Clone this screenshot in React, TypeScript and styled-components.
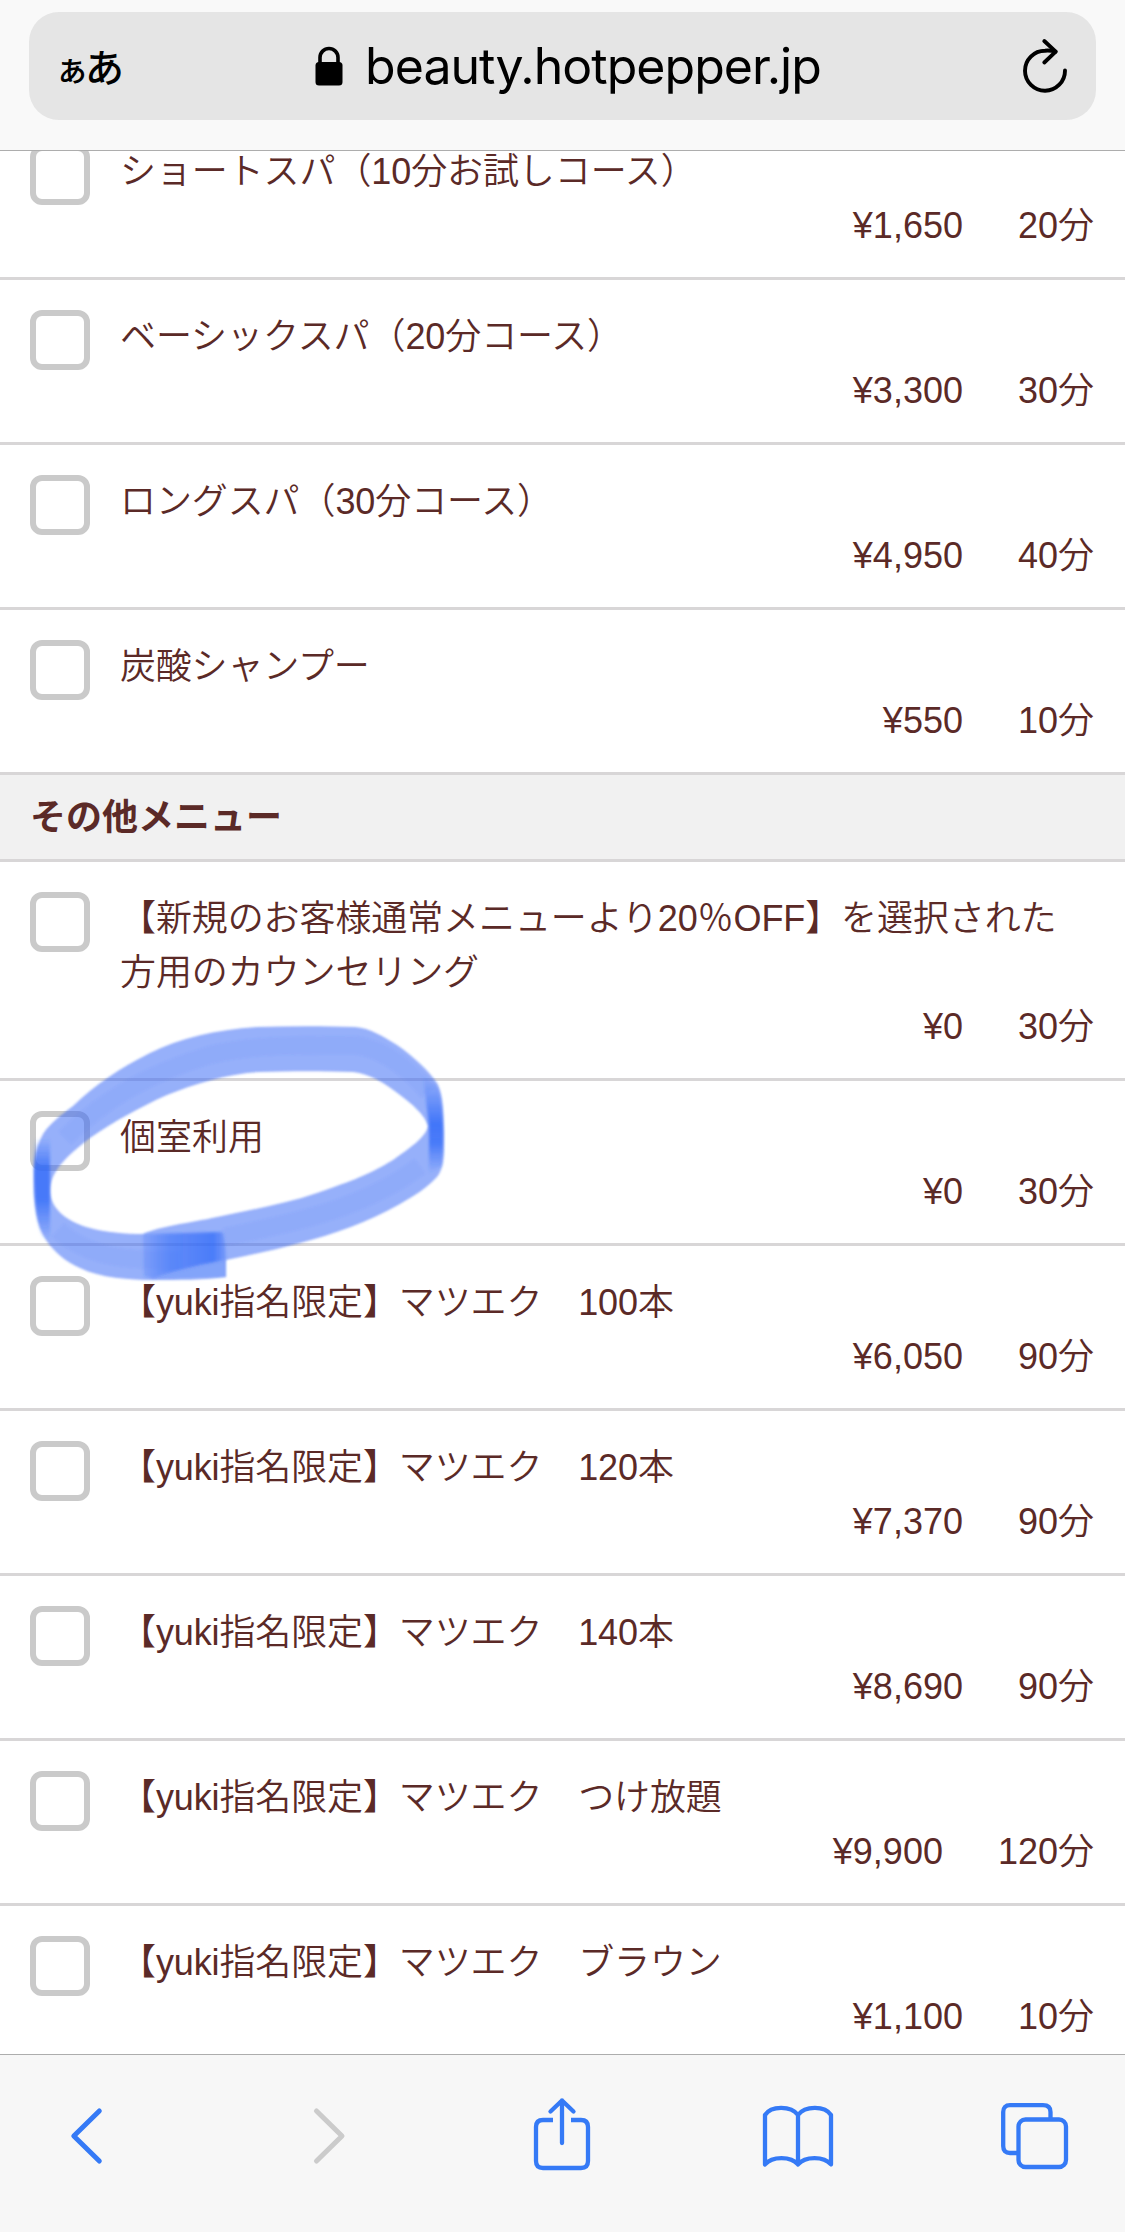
import React from 'react';
import styled, { createGlobalStyle } from 'styled-components';

const GlobalStyle = createGlobalStyle`
  * { box-sizing: border-box; }
  body { margin: 0; background: #fff; }
`;

const Screen = styled.div`
  position: relative;
  display: flex;
  flex-direction: column;
  width: 1125px;
  height: 2232px;
  overflow: hidden;
  background: #fff;
  color: #5b2a27;
  font-family: 'Liberation Sans', 'Noto Sans CJK JP', sans-serif;
  font-size: 36px;
  line-height: 54px;
`;

const Header = styled.header`
  flex: none;
  height: 151px;
  padding: 12px 29px 0;
  background: #f9f9f9;
  border-bottom: 1px solid #adadad;
`;

const AddressBar = styled.div`
  display: flex;
  align-items: center;
  justify-content: space-between;
  height: 108px;
  padding: 0 26px 0 28px;
  border-radius: 30px;
  background: #e5e5e5;
  color: #000;
`;

const TextSize = styled.div`
  display: flex;
  align-items: baseline;
  width: 64px;
  font-family: 'Noto Sans CJK JP', sans-serif;
  font-weight: 500;
  line-height: 60px;
`;

const Kana = styled.span<{ $size: number; $shift: number }>`
  font-size: ${(p) => p.$size}px;
  margin-left: ${(p) => p.$shift}px;
`;

const Site = styled.div`
  display: flex;
  align-items: center;
  gap: 22px;
  margin-right: 5px;
`;

const Domain = styled.span`
  font-family: Inter, sans-serif;
  font-size: 50px;
  line-height: 60px;
  letter-spacing: -0.98px;
`;

const Menu = styled.main`
  flex: 1;
  min-height: 0;
  overflow: hidden;
`;

const List = styled.ul<{ $scrolled?: boolean }>`
  list-style: none;
  margin: ${(p) => (p.$scrolled ? '-36px' : '0')} 0 0;
  padding: 0;
`;

const Item = styled.li`
  display: flex;
  align-items: flex-start;
  gap: 30px;
  padding: 30px 30px 24px;
  border-bottom: 3px solid #d8d6d7;
`;

const Checkbox = styled.span`
  flex: none;
  width: 60px;
  height: 60px;
  border: 6px solid #cacaca;
  border-radius: 12px;
  background: #fff;
`;

const Details = styled.div`
  flex: 1;
`;

const Title = styled.div<{ $tracking?: number }>`
  font-weight: 350;
  letter-spacing: ${(p) => p.$tracking ?? 0}px;
  white-space: pre-line;
`;

const Meta = styled.div`
  display: flex;
  justify-content: flex-end;
  gap: 55px;
  padding-right: 1px;
  font-weight: 350;
`;

const SectionTitle = styled.h2`
  height: 87px;
  margin: 0;
  padding: 16px 30px 0;
  background: #f1f1f1;
  border-bottom: 3px solid #d8d6d7;
  font-size: 36px;
  font-weight: 700;
  line-height: 54px;
`;

const Toolbar = styled.nav`
  flex: none;
  display: flex;
  justify-content: space-between;
  height: 178px;
  padding: 41px 51px 0 46px;
  background: #f7f7f7;
  border-top: 1px solid #adadad;
`;

const ToolIcon = styled.svg<{ $muted?: boolean; $weight?: number }>`
  width: 80px;
  height: 80px;
  fill: none;
  stroke: ${(p) => (p.$muted ? '#cbcbcb' : '#357af6')};
  stroke-width: ${(p) => p.$weight ?? 4.3};
  stroke-linecap: round;
  stroke-linejoin: round;
`;

const Marker = styled.svg`
  position: absolute;
  left: 20px;
  top: 1010px;
  width: 440px;
  height: 290px;
  pointer-events: none;
`;

type MenuItem = { title: string; price: string; time: string; tracking?: number };

const spa: MenuItem[] = [
  { title: 'ショートスパ（10分お試しコース）', price: '¥1,650', time: '20分', tracking: -0.1 },
  { title: 'ベーシックスパ（20分コース）', price: '¥3,300', time: '30分', tracking: -0.1 },
  { title: 'ロングスパ（30分コース）', price: '¥4,950', time: '40分', tracking: -0.1 },
  { title: '炭酸シャンプー', price: '¥550', time: '10分', tracking: -0.2 },
];

const others: MenuItem[] = [
  {
    title: '【新規のお客様通常メニューより20％OFF】を選択された\n方用のカウンセリング',
    price: '¥0',
    time: '30分',
    tracking: -0.1,
  },
  { title: '個室利用', price: '¥0', time: '30分' },
  { title: '【yuki指名限定】マツエク　100本', price: '¥6,050', time: '90分', tracking: -0.12 },
  { title: '【yuki指名限定】マツエク　120本', price: '¥7,370', time: '90分', tracking: -0.12 },
  { title: '【yuki指名限定】マツエク　140本', price: '¥8,690', time: '90分', tracking: -0.12 },
  { title: '【yuki指名限定】マツエク　つけ放題', price: '¥9,900', time: '120分', tracking: -0.12 },
  { title: '【yuki指名限定】マツエク　ブラウン', price: '¥1,100', time: '10分', tracking: -0.12 },
];

function Row({ title, price, time, tracking }: MenuItem) {
  return (
    <Item>
      <Checkbox />
      <Details>
        <Title $tracking={tracking}>{title}</Title>
        <Meta>
          <span>{price}</span>
          <span>{time}</span>
        </Meta>
      </Details>
    </Item>
  );
}

function LockIcon() {
  return (
    <svg width="28" height="42" viewBox="0 0 28 42">
      <path d="M5 19V12.500a9 9 0 0 1 18 0V19" fill="none" stroke="#000" strokeWidth="3.600" />
      <rect x="0.500" y="17" width="27" height="23.500" rx="3.500" />
    </svg>
  );
}

function ReloadIcon() {
  return (
    <svg width="50" height="60" viewBox="0 0 50 60" fill="none" stroke="#000" strokeWidth="3.900" strokeLinecap="round" strokeLinejoin="round">
      <path d="M45 34.500A20 20 0 1 1 25 14.700C29 14.300 32 14.700 35.500 15.700" />
      <path d="M24.300 5L35.700 15.700L24.300 26.500" />
    </svg>
  );
}

function MarkerCircle() {
  return (
    <Marker viewBox="20 1010 440 290">
      <defs>
        <filter id="soft" x="-5%" y="-5%" width="110%" height="110%">
          <feGaussianBlur stdDeviation="1.2" />
        </filter>
        <filter id="softer" x="-30%" y="-10%" width="160%" height="120%">
          <feGaussianBlur stdDeviation="1.4" />
        </filter>
        <linearGradient id="leftInk" x1="0" y1="0" x2="0" y2="1">
          <stop offset="0" stopColor="#2b66f8" stopOpacity="0" />
          <stop offset="0.3" stopColor="#2b66f8" stopOpacity="0.75" />
          <stop offset="0.6" stopColor="#2b66f8" stopOpacity="0.75" />
          <stop offset="1" stopColor="#2b66f8" stopOpacity="0" />
        </linearGradient>
        <linearGradient id="rightInk" x1="0" y1="0" x2="0" y2="1">
          <stop offset="0" stopColor="#2b66f8" stopOpacity="0" />
          <stop offset="0.5" stopColor="#2b66f8" stopOpacity="0.8" />
          <stop offset="0.7" stopColor="#2b66f8" stopOpacity="0.7" />
          <stop offset="1" stopColor="#2b66f8" stopOpacity="0" />
        </linearGradient>
        <linearGradient id="overlapInk" x1="0" y1="0" x2="1" y2="0">
          <stop offset="0" stopColor="#2b66f8" stopOpacity="0.2" />
          <stop offset="0.3" stopColor="#2b66f8" stopOpacity="0.5" />
          <stop offset="0.85" stopColor="#2b66f8" stopOpacity="0.7" />
          <stop offset="1" stopColor="#2b66f8" stopOpacity="0.3" />
        </linearGradient>
      </defs>
      <path
        filter="url(#soft)"
        fill="#3865f5"
        fillOpacity="0.52"
        fillRule="evenodd"
        d="M34 1180C34 1165 35 1148 43 1134C50 1123 60 1116 73 1106C96 1084 120 1068 150 1053C180 1038 215 1030 257 1027C290 1026 325 1026 355 1027C370 1028 384 1037 397 1045C413 1056 430 1072 437 1083C444 1096 443 1115 444 1133C444 1150 445 1168 437 1177C426 1189 412 1197 400 1204C368 1222 334 1234 300 1243C275 1250 250 1255 226 1260V1277C204 1280 178 1280 153 1280C130 1280 100 1278 80 1268C66 1262 54 1252 46 1240C36 1225 34 1205 34 1180ZM50 1190C51 1172 64 1158 90 1138C115 1121 140 1107 167 1095C195 1084 225 1074 260 1072C290 1071 325 1071 353 1072C370 1074 385 1083 400 1095C412 1104 424 1114 428 1126C426 1137 410 1148 393 1160C365 1177 345 1183 317 1193C285 1204 250 1210 217 1217C190 1223 160 1226 143 1234C125 1234 105 1232 90 1228C70 1223 50 1210 50 1190Z"
      />
      <path
        filter="url(#soft)"
        fill="none"
        stroke="#3c68f0"
        strokeOpacity="0.08"
        strokeWidth="18"
        d="M65 1138C105 1098 150 1073 210 1055C260 1043 310 1046 355 1045C385 1049 411 1071 428 1092M420 1166C360 1212 280 1225 225 1237M58 1230C90 1259 130 1260 180 1261"
      />
      <path filter="url(#softer)" fill="url(#leftInk)" d="M35 1138H50V1240H43C33 1215 33 1170 35 1138Z" />
      <path filter="url(#softer)" fill="url(#rightInk)" d="M423 1075L437 1085C444 1100 444 1140 442 1166L429 1174V1126Z" />
      <path filter="url(#softer)" fill="url(#overlapInk)" d="M143 1234L222 1232Q225 1233 226 1260C204 1264 172 1271 153 1279L144 1276Z" />
      <path filter="url(#soft)" fill="#3168f8" fillOpacity="0.18" d="M153 1279C180 1270 204 1264 226 1260V1277Z" />
    </Marker>
  );
}

export default function App() {
  return (
    <Screen>
      <GlobalStyle />
      <Header>
        <AddressBar>
          <TextSize>
            <Kana $size={34} $shift={-2}>ぁ</Kana>
            <Kana $size={39} $shift={-4}>あ</Kana>
          </TextSize>
          <Site>
            <LockIcon />
            <Domain>beauty.hotpepper.jp</Domain>
          </Site>
          <ReloadIcon />
        </AddressBar>
      </Header>
      <Menu>
        <List $scrolled>
          {spa.map((item) => <Row key={item.title} {...item} />)}
        </List>
        <SectionTitle>その他メニュー</SectionTitle>
        <List>
          {others.map((item) => <Row key={item.title} {...item} />)}
        </List>
      </Menu>
      <MarkerCircle />
      <Toolbar>
        <ToolIcon $weight={5} viewBox="0 0 80 80"><path d="M53.300 15L27.800 40L53.300 65" /></ToolIcon>
        <ToolIcon $weight={5} $muted viewBox="0 0 80 80"><path d="M33.500 15L59 40L33.500 65" /></ToolIcon>
        <ToolIcon viewBox="0 0 80 80">
          <path strokeLinecap="butt" d="M33 24H23Q16 24 16 31V65Q16 72 23 72H61Q68 72 68 65V31Q68 24 61 24H51" />
          <path d="M42 47V4.500M30.500 15.500L42 4.500L53.500 15.500" />
        </ToolIcon>
        <ToolIcon viewBox="0 0 80 80">
          <path d="M8 68.500V19C14 9.500 34 9.500 41 19C48 9.500 68 9.500 74 19V68.500C67 60 48 60 41 68.500C34 60 15 60 8 68.500ZM41 19V68.500" />
        </ToolIcon>
        <ToolIcon viewBox="0 0 80 80">
          <rect x="24.500" y="23.500" width="47.500" height="47.500" rx="7" />
          <path strokeLinecap="butt" d="M24.500 57H16Q9.200 57 9.200 50V16Q9.200 9.200 16 9.200H49Q56.500 9.200 56.500 16V23.500" />
        </ToolIcon>
      </Toolbar>
    </Screen>
  );
}
